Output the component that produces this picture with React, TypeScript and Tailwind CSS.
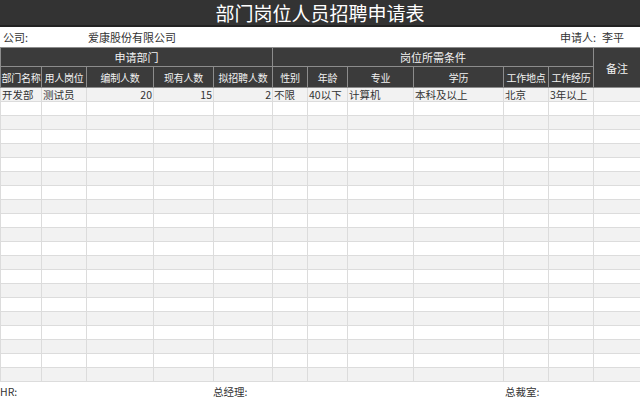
const cols = [41, 45, 67, 60, 59, 35, 40, 66, 90, 45, 45, 47];
const F = { fontFamily: '"Noto Sans CJK SC", "Liberation Sans", sans-serif' };

export default function App() {
  const rows = Array.from({ length: 21 });
  const th = "border border-[#8c8c8c] text-[#f2f2f2] font-normal p-0";
  return (
    <div className="w-[640px] h-[400px] bg-white overflow-hidden flex flex-col" style={F}>
      <div className="h-[28px] bg-[#333333] border-b-2 border-[#222] flex items-center justify-center text-white text-[19px] leading-none">部门岗位人员招聘申请表</div>
      <div className="h-[22px] flex items-center text-[11px] text-[#333]">
        <span className="w-[88px] pl-[3px]">公司:</span>
        <span>爱康股份有限公司</span>
        <span className="ml-auto">申请人:</span>
        <span className="w-[44px] pl-[6px]">李平</span>
      </div>
      <table className="border-collapse table-fixed w-[640px]">
        <colgroup>{cols.map((w, i) => <col key={i} style={{ width: w }} />)}</colgroup>
        <thead className="bg-[#3b3b3b]">
          <tr className="h-[19px]">
            <th colSpan={5} className={th + " text-[11px]"}>申请部门</th>
            <th colSpan={6} className={th + " text-[11px]"}>岗位所需条件</th>
            <th rowSpan={2} className={th + " text-[11px]"}>备注</th>
          </tr>
          <tr className="h-[21px]">
            {["部门名称", "用人岗位", "编制人数", "现有人数", "拟招聘人数", "性别", "年龄", "专业", "学历", "工作地点", "工作经历"].map((t) => (
              <th key={t} className={th + " text-[10px] tracking-[-0.2px] whitespace-nowrap overflow-hidden"}>{t}</th>
            ))}
          </tr>
        </thead>
        <tbody className="text-[10.5px] text-[#333]">
          {rows.map((_, r) => (
            <tr key={r} className={"h-[14px] leading-[13px] " + (r % 2 === 0 ? "bg-[#f2f2f2]" : "bg-white")}>
              {cols.map((_, c) => {
                const d = r === 0 ? ["开发部", "测试员", "20", "15", "2", "不限", "40以下", "计算机", "本科及以上", "北京", "3年以上", ""][c] : "";
                const right = c >= 2 && c <= 4;
                return (
                  <td key={c} className={"border border-[#dcdcdc] p-0 px-[1px] whitespace-nowrap overflow-hidden " + (right ? "text-right" : "text-left")}>{d}</td>
                );
              })}
            </tr>
          ))}
        </tbody>
      </table>
      <div className="flex-1 flex items-center text-[10.5px] text-[#333] pt-[2px]">
        <span className="w-[213px]">HR:</span>
        <span className="w-[292px]">总经理:</span>
        <span>总裁室:</span>
      </div>
    </div>
  );
}
